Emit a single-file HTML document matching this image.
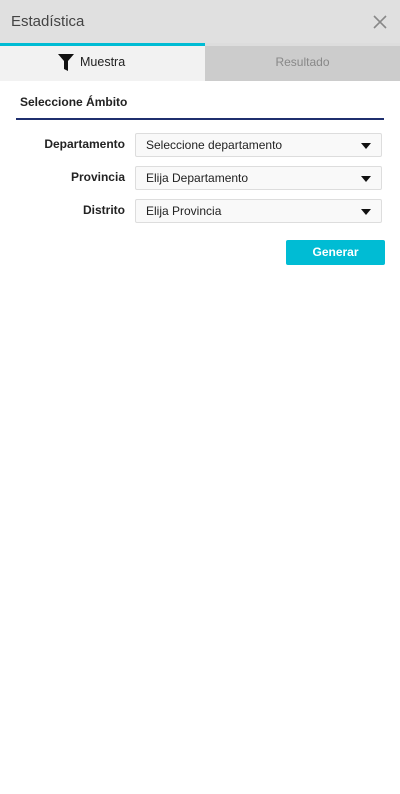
<!DOCTYPE html>
<html><head><meta charset="utf-8"><style>
*{box-sizing:border-box;margin:0;padding:0}
body{width:400px;height:794px;background:#fff;font-family:"Liberation Sans",sans-serif;position:relative;overflow:hidden}
.hdr{position:absolute;left:0;top:0;width:400px;height:43px;background:#e0e0e0}
.hdr .t{position:absolute;left:11px;top:13px;font-size:15px;color:#444}
.tabL{position:absolute;left:0;top:43px;width:205px;height:38px;background:#f2f2f2;border-top:3px solid #00bcd4}
.tabR{position:absolute;left:205px;top:43px;width:195px;height:38px;background:#cccccc;border-top:3px solid #ddd;color:#888;font-size:12px;text-align:center;line-height:33px}
.tabL span{position:absolute;left:80px;top:9px;font-size:12.5px;color:#222}
.sec{position:absolute;left:20px;top:95px;font-size:12px;font-weight:bold;color:#222}
.line{position:absolute;left:16px;top:118px;width:368px;height:2px;background:#1f2f6e}
.lbl{position:absolute;right:275px;font-size:12px;font-weight:bold;color:#222}
.sel{position:absolute;left:135px;width:247px;height:24px;border:1px solid #ddd;border-radius:2px;background:#f9f9f9;font-size:12px;color:#222;padding-left:10px;line-height:22px}
.sel:after{content:"";position:absolute;right:10px;top:9px;border-left:5.5px solid transparent;border-right:5.5px solid transparent;border-top:6px solid #111}
.btn{position:absolute;left:286px;top:240px;width:99px;height:25px;background:#00bcd4;border-radius:2px;color:#fff;font-size:12px;font-weight:bold;text-align:center;line-height:25px}
</style></head><body>
<div class="hdr"><div class="t">Estadística</div>
<svg style="position:absolute;left:372px;top:14px" width="16" height="16"><path d="M2 2L14 14M14 2L2 14" stroke="#888" stroke-width="1.6"/></svg></div>
<div class="tabL"><svg style="position:absolute;left:58px;top:8px" width="16" height="18"><path d="M0 0H16L10 7V17L6 15V7Z" fill="#111"/></svg><span>Muestra</span></div>
<div class="tabR">Resultado</div>
<div class="sec">Seleccione Ámbito</div>
<div class="line"></div>
<div class="lbl" style="top:137px">Departamento</div><div class="sel" style="top:133px">Seleccione departamento</div>
<div class="lbl" style="top:170px">Provincia</div><div class="sel" style="top:166px">Elija Departamento</div>
<div class="lbl" style="top:203px">Distrito</div><div class="sel" style="top:199px">Elija Provincia</div>
<div class="btn">Generar</div>
</body></html>
